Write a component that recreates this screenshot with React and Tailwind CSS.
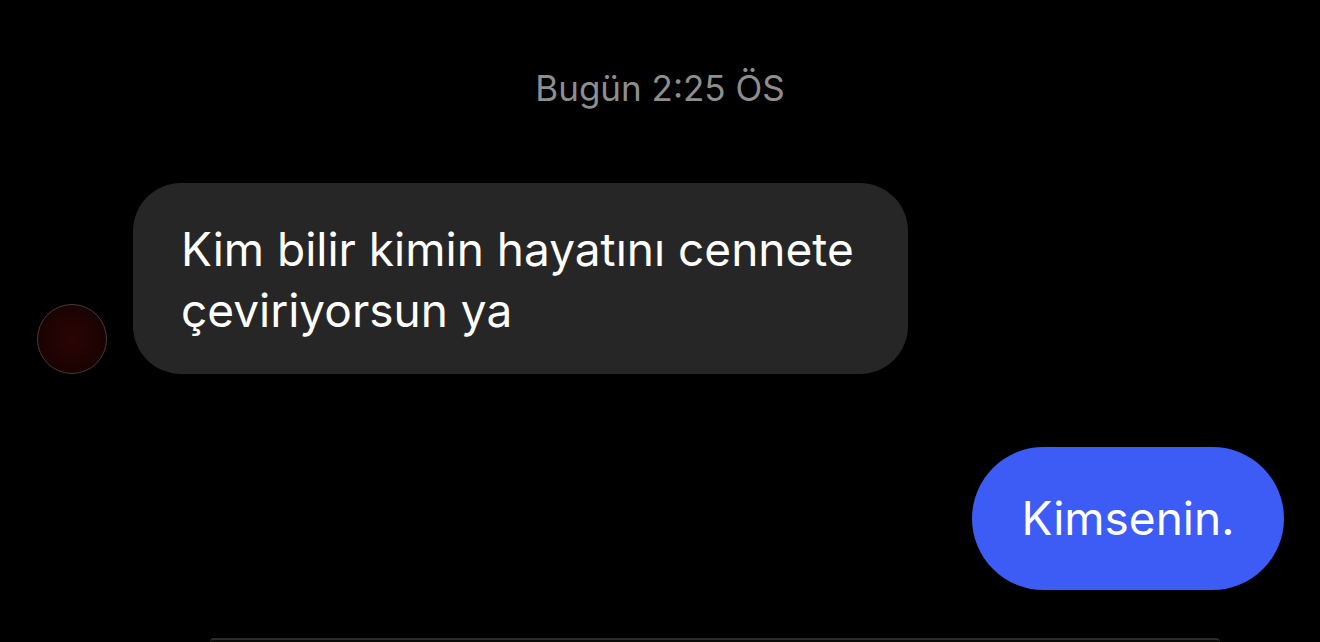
import React from 'react'

// Chat thread: timestamp, incoming bubble with avatar, outgoing bubble

function Avatar() {
  return (
    <div className="w-[70px] h-[70px] shrink-0 rounded-full border border-[#4a3a3a] bg-[radial-gradient(circle,#2a0505_0%,#1a0202_70%)]" />
  )
}

export default function App() {
  return (
    <div
      className="w-[1320px] h-[642px] bg-black overflow-hidden flex flex-col"
      style={{ fontFamily: 'Inter, "Noto Sans", sans-serif' }}
    >
      <div className="pt-[68px] h-[108px] text-center text-[35px] leading-[40px] text-[#8e8e8e]">
        Bugün 2:25 ÖS
      </div>

      <div className="mt-[75px] flex items-end gap-[26px] pl-[37px]">
        <Avatar />
        <div className="w-[775px] h-[191px] rounded-[48px] bg-[#262626] pl-[48px] pr-[40px] pt-[36px] text-[46px] leading-[61px] text-white">
          Kim bilir kimin hayatını cennete çeviriyorsun ya
        </div>
      </div>

      <div className="mt-[73px] flex justify-end pr-[36px]">
        <div className="w-[312px] h-[143px] rounded-full bg-[#3c5cf5] flex items-center justify-center text-[46px] text-white">
          Kimsenin.
        </div>
      </div>

      <div className="mt-[48px] ml-[210px] mr-[100px] h-[10px] rounded-t-[20px] border-t-2 border-[#2a2a2a] bg-[#0a0a0a]" />
    </div>
  )
}
